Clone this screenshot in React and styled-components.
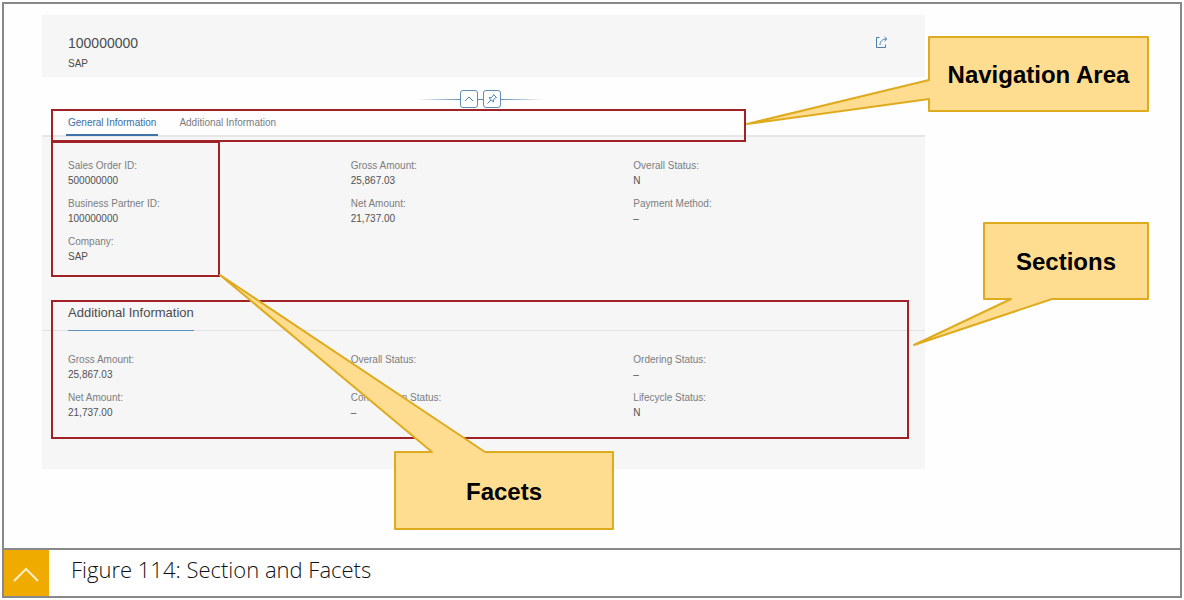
import React from "react";
import styled, { createGlobalStyle } from "styled-components";

const GlobalStyle = createGlobalStyle`
  *, *::before, *::after { box-sizing: border-box; }
  body { margin: 0; background: #fff; }
  dl, dd, h1, h2, p, figure { margin: 0; }
`;

const Figure = styled.figure`
  margin: 2px;
  border: 2px solid #87888c;
  background: #fefefe;
`;

const Canvas = styled.div`
  position: relative;
  padding: 11px 255px 79px 38px;
`;

const Page = styled.main`
  position: relative;
  font-family: "Liberation Sans", Arial, sans-serif;
  font-size: 10px;
  line-height: 15px;
  color: #4a4c4e;
`;

const PageHeader = styled.header`
  display: flex;
  justify-content: space-between;
  align-items: flex-start;
  padding: 17px 37px 3px 26px;
  background: #f6f6f6;
`;

const Title = styled.h1`
  font-size: 14px;
  line-height: 22px;
  font-weight: 400;
`;

const Subtitle = styled.p`
  line-height: 20px;
`;

const IconButton = styled.button`
  display: flex;
  align-items: center;
  justify-content: center;
  width: ${(p) => p.$size}px;
  height: ${(p) => p.$size}px;
  padding: 0;
  border: ${(p) => (p.$outlined ? "1px solid #5e8db5" : "0")};
  border-radius: 3px;
  background: ${(p) => (p.$outlined ? "#fff" : "transparent")};
  color: #4a7fad;
`;

const ShareSlot = styled.div`
  padding-top: 4px;
`;

const ToggleStrip = styled.div`
  display: flex;
  align-items: center;
  justify-content: center;
  height: 33px;
  padding: 11px 6px 0 0;
`;

const Rule = styled.span`
  width: ${(p) => p.$width}px;
  height: 1px;
  background: ${(p) =>
    p.$fade ? `linear-gradient(to ${p.$fade}, #5e8db5, transparent)` : "#5e8db5"};
`;

const Tabs = styled.nav`
  display: flex;
  gap: 19px;
  height: 27px;
  padding-left: 24px;
  border-bottom: 2px solid #e6e6e6;
`;

const Tab = styled.a`
  height: 26px;
  padding: 5px 2px 0;
  border-bottom: 2px solid ${(p) => (p.$active ? "#3f72a8" : "transparent")};
  color: ${(p) => (p.$active ? "#3a6ea5" : "#7a7c7e")};
  line-height: 15px;
  text-decoration: none;
`;

const Body = styled.div`
  padding: 21px 0 49px;
  background: #f6f6f6;
`;

const Facets = styled.div`
  display: grid;
  grid-template-columns: repeat(3, 1fr);
  padding: 0 9px 0 26px;
`;

const FieldList = styled.dl`
  display: flex;
  flex-direction: column;
  gap: 8px;
`;

const Label = styled.dt`
  color: #7b7d7f;
`;

const Value = styled.dd`
  color: #4f5153;
`;

const SectionHeader = styled.div`
  margin: 39px 0 21px;
  padding-left: 26px;
  border-bottom: 1px solid #e2e2e2;
`;

const SectionTitle = styled.h2`
  width: fit-content;
  margin-bottom: -1px;
  padding-bottom: 7px;
  border-bottom: 1px solid #5b92c4;
  font-size: 13px;
  line-height: 20px;
  font-weight: 400;
`;

const Highlight = styled.div`
  position: absolute;
  top: ${(p) => p.$top}px;
  left: 9px;
  right: ${(p) => p.$right};
  width: ${(p) => p.$width};
  height: ${(p) => p.$height}px;
  border: 2px solid #a02226;
  pointer-events: none;
`;

const CalloutBox = styled.div`
  position: absolute;
  top: ${(p) => p.$top}px;
  left: ${(p) => p.$left};
  right: ${(p) => p.$right};
  width: ${(p) => p.$width}px;
  height: ${(p) => p.$height}px;
  padding-top: 2px;
  display: flex;
  align-items: center;
  justify-content: center;
  font: bold 24px/28px "Liberation Sans", Arial, sans-serif;
  color: #000;
`;

const CalloutShape = styled.svg`
  position: absolute;
  inset: 0;
  overflow: visible;
`;

const CalloutText = styled.span`
  position: relative;
`;

const Caption = styled.figcaption`
  display: flex;
  border-top: 2px solid #87888c;
  background: #fff;
  font: 300 22px/28px "Open Sans", "Noto Sans", sans-serif;
  color: #111;
`;

const TopButton = styled.button`
  width: 45px;
  height: 46px;
  padding: 4px 2px 0 0;
  border: 0;
  background: #f0ab00;
`;

const CaptionText = styled.span`
  padding: 5px 22px;
`;

function Callout({ text, width, height, points, ...place }) {
  return (
    <CalloutBox
      $top={place.top}
      $left={place.left ?? "auto"}
      $right={place.right ?? "auto"}
      $width={width}
      $height={height}
    >
      <CalloutShape width={width} height={height} aria-hidden="true">
        <polygon points={points} fill="#ffdd90" stroke="#dfab1e" strokeWidth="2" strokeLinejoin="round" />
      </CalloutShape>
      <CalloutText>{text}</CalloutText>
    </CalloutBox>
  );
}

function Fields({ items }) {
  return (
    <FieldList>
      {items.map(([label, value]) => (
        <div key={label}>
          <Label>{label}</Label>
          <Value>{value}</Value>
        </div>
      ))}
    </FieldList>
  );
}

const general = [
  [["Sales Order ID:", "500000000"], ["Business Partner ID:", "100000000"], ["Company:", "SAP"]],
  [["Gross Amount:", "25,867.03"], ["Net Amount:", "21,737.00"]],
  [["Overall Status:", "N"], ["Payment Method:", "–"]],
];

const additional = [
  [["Gross Amount:", "25,867.03"], ["Net Amount:", "21,737.00"]],
  [["Overall Status:", "N"], ["Confirmation Status:", "–"]],
  [["Ordering Status:", "–"], ["Lifecycle Status:", "N"]],
];

export default function App() {
  return (
    <>
      <GlobalStyle />
      <Figure>
        <Canvas>
          <Page>
            <PageHeader>
              <div>
                <Title>100000000</Title>
                <Subtitle>SAP</Subtitle>
              </div>
              <ShareSlot>
                <IconButton $size={13} aria-label="Share">
                  <svg width="13" height="13" viewBox="0 0 13 13" fill="none" stroke="currentColor">
                    <path d="M4.5 1.5H1.5V11.5H10.5V8.5" />
                    <path d="M5 9C5 5.6 7 3.2 11.6 3M9.4 0.8L11.8 3L9.6 5.2" />
                  </svg>
                </IconButton>
              </ShareSlot>
            </PageHeader>

            <ToggleStrip>
              <Rule $width={42} $fade="left" />
              <IconButton $size={18} $outlined aria-label="Collapse header">
                <svg width="14" height="14" viewBox="0 0 14 14" fill="none" stroke="currentColor">
                  <path d="M3 9L7 5L11 9" />
                </svg>
              </IconButton>
              <Rule $width={5} />
              <IconButton $size={18} $outlined aria-label="Pin header">
                <svg width="14" height="14" viewBox="0 0 14 14" fill="none" stroke="currentColor" strokeLinejoin="round">
                  <path d="M8.5 2.5L11.5 5.5L10.3 5.9L8.3 8L8.4 10L4 5.7L6.1 5.7L8.2 3.7ZM6 8L2.5 11.5" />
                </svg>
              </IconButton>
              <Rule $width={42} $fade="right" />
            </ToggleStrip>

            <Tabs>
              <Tab href="#general" $active>General Information</Tab>
              <Tab href="#additional">Additional Information</Tab>
            </Tabs>

            <Body>
              <Facets id="general">
                {general.map((items, i) => <Fields key={i} items={items} />)}
              </Facets>
              <SectionHeader>
                <SectionTitle>Additional Information</SectionTitle>
              </SectionHeader>
              <Facets id="additional">
                {additional.map((items, i) => <Fields key={i} items={items} />)}
              </Facets>
            </Body>

            <Highlight $top={94} $right="179px" $width="auto" $height={33} />
            <Highlight $top={126} $right="auto" $width="169px" $height={136} />
            <Highlight $top={285} $right="16px" $width="auto" $height={139} />
          </Page>

          <Callout
            text="Navigation Area" top={33} right="31px" width={221} height={74}
            points="1,0 220,0 220,74 1,74 1,62 -181,87 1,43"
          />
          <Callout
            text="Sections" top={219} right="31px" width={166} height={76}
            points="1,0 165,0 165,76 69,76 -69,122 28,76 1,76"
          />
          <Callout
            text="Facets" top={448} left="390px" width={220} height={77}
            points="1,0 38,0 -174,-177 91,0 219,0 219,77 1,77"
          />
        </Canvas>

        <Caption>
          <TopButton aria-label="Back to top">
            <svg width="28" height="18" viewBox="0 0 28 18" fill="none" stroke="#fff0c8" strokeWidth="2">
              <path d="M2 16L14 4L26 16" />
            </svg>
          </TopButton>
          <CaptionText>Figure 114: Section and Facets</CaptionText>
        </Caption>
      </Figure>
    </>
  );
}
